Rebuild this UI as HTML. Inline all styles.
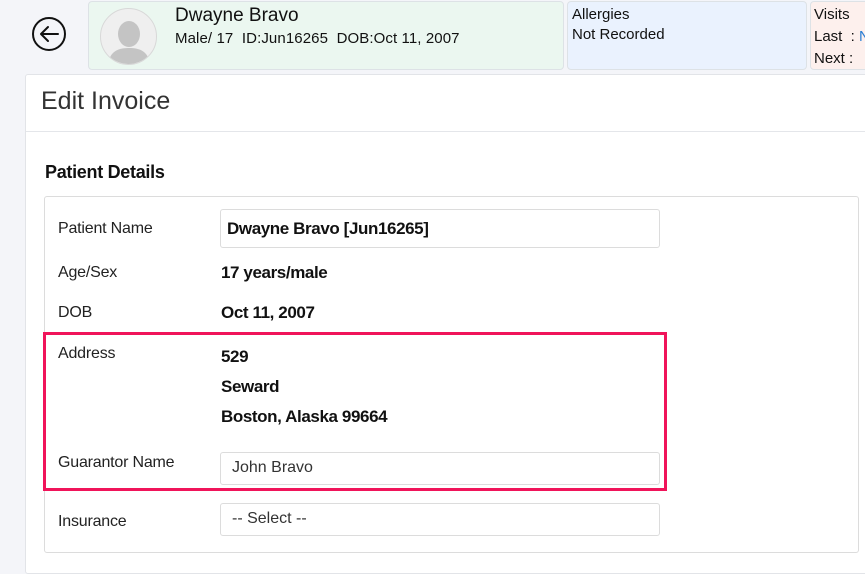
<!DOCTYPE html>
<html><head><style>
*{margin:0;padding:0;box-sizing:border-box}
body{width:865px;height:568px;overflow:hidden;background:#f4f5f9;font-family:"Liberation Sans",sans-serif;color:#111;position:relative}
.a{position:absolute;white-space:nowrap}
.card{position:absolute;border:1px solid #dde2e6;border-radius:4px}
.in{position:absolute;left:220px;width:440px;background:#fff;border:1px solid #dcdcdc;border-radius:3px}
.lbl{position:absolute;left:58px;font-size:16px;color:#222;letter-spacing:-0.2px}
.val{position:absolute;left:221px;font-size:17px;font-weight:bold;letter-spacing:-0.4px}
</style></head><body>
<svg class="a" style="left:31px;top:16px" width="36" height="36" viewBox="0 0 36 36"><circle cx="18" cy="18" r="16" fill="none" stroke="#111" stroke-width="2"/><path d="M27 18H10M17 11l-7 7 7 7" fill="none" stroke="#111" stroke-width="2" stroke-linecap="round" stroke-linejoin="round"/></svg>
<div class="card" style="left:88px;top:1px;width:476px;height:69px;background:#ebf7f0"></div>
<div class="a" style="left:100px;top:8px;width:57px;height:57px;border-radius:50%;border:1px solid #d8d8d8;background:#efefef;overflow:hidden">
<svg width="57" height="57" viewBox="0 0 57 57"><ellipse cx="28" cy="25" rx="11" ry="13" fill="#c4c4c4"/><path d="M7 57C8 43 16 39 28 39S48 43 49 57Z" fill="#c4c4c4"/></svg></div>
<div class="a" style="left:175px;top:5px;font-size:19px;color:#111">Dwayne Bravo</div>
<div class="a" style="left:175px;top:30px;font-size:15px;color:#111;letter-spacing:0.1px">Male/ 17 &nbsp;ID:Jun16265 &nbsp;DOB:Oct 11, 2007</div>
<div class="card" style="left:567px;top:1px;width:240px;height:69px;background:#eaf2fe"></div>
<div class="a" style="left:572px;top:6px;font-size:15px">Allergies</div>
<div class="a" style="left:572px;top:26px;font-size:15px">Not Recorded</div>
<div class="card" style="left:810px;top:1px;width:70px;height:69px;background:#fdf0ed"></div>
<div class="a" style="left:814px;top:6px;font-size:15px">Visits</div>
<div class="a" style="left:814px;top:28px;font-size:15px">Last &nbsp;: <span style="color:#2a7fd4">N</span></div>
<div class="a" style="left:814px;top:50px;font-size:15px">Next :</div>
<div class="a" style="left:25px;top:74px;width:845px;height:500px;background:#fff;border:1px solid #e2e4e8;border-radius:3px"></div>
<div class="a" style="left:26px;top:131px;width:840px;height:1px;background:#e4e6ea"></div>
<div class="a" style="left:41px;top:87px;font-size:25px;color:#333">Edit Invoice</div>
<div class="a" style="left:45px;top:162px;font-size:18px;font-weight:bold;letter-spacing:-0.3px">Patient Details</div>
<div class="a" style="left:44px;top:196px;width:815px;height:357px;border:1px solid #dcdcdc;border-radius:3px"></div>
<div class="lbl" style="top:220px">Patient Name</div>
<div class="in" style="top:209px;height:39px"></div>
<div class="val" style="left:227px;top:219px">Dwayne Bravo [Jun16265]</div>
<div class="lbl" style="top:264px">Age/Sex</div>
<div class="val" style="top:263px">17 years/male</div>
<div class="lbl" style="top:304px">DOB</div>
<div class="val" style="top:303px">Oct 11, 2007</div>
<div class="lbl" style="top:345px">Address</div>
<div class="val" style="top:347px">529</div>
<div class="val" style="top:377px">Seward</div>
<div class="val" style="top:407px">Boston, Alaska 99664</div>
<div class="lbl" style="top:454px">Guarantor Name</div>
<div class="in" style="top:452px;height:33px"></div>
<div class="a" style="left:232px;top:459px;font-size:16px;color:#333">John Bravo</div>
<div class="a" style="left:43px;top:332px;width:624px;height:159px;border:3px solid #f0145a"></div>
<div class="lbl" style="top:513px">Insurance</div>
<div class="in" style="top:503px;height:33px"></div>
<div class="a" style="left:232px;top:510px;font-size:16px;color:#333">-- Select --</div>
</body></html>
